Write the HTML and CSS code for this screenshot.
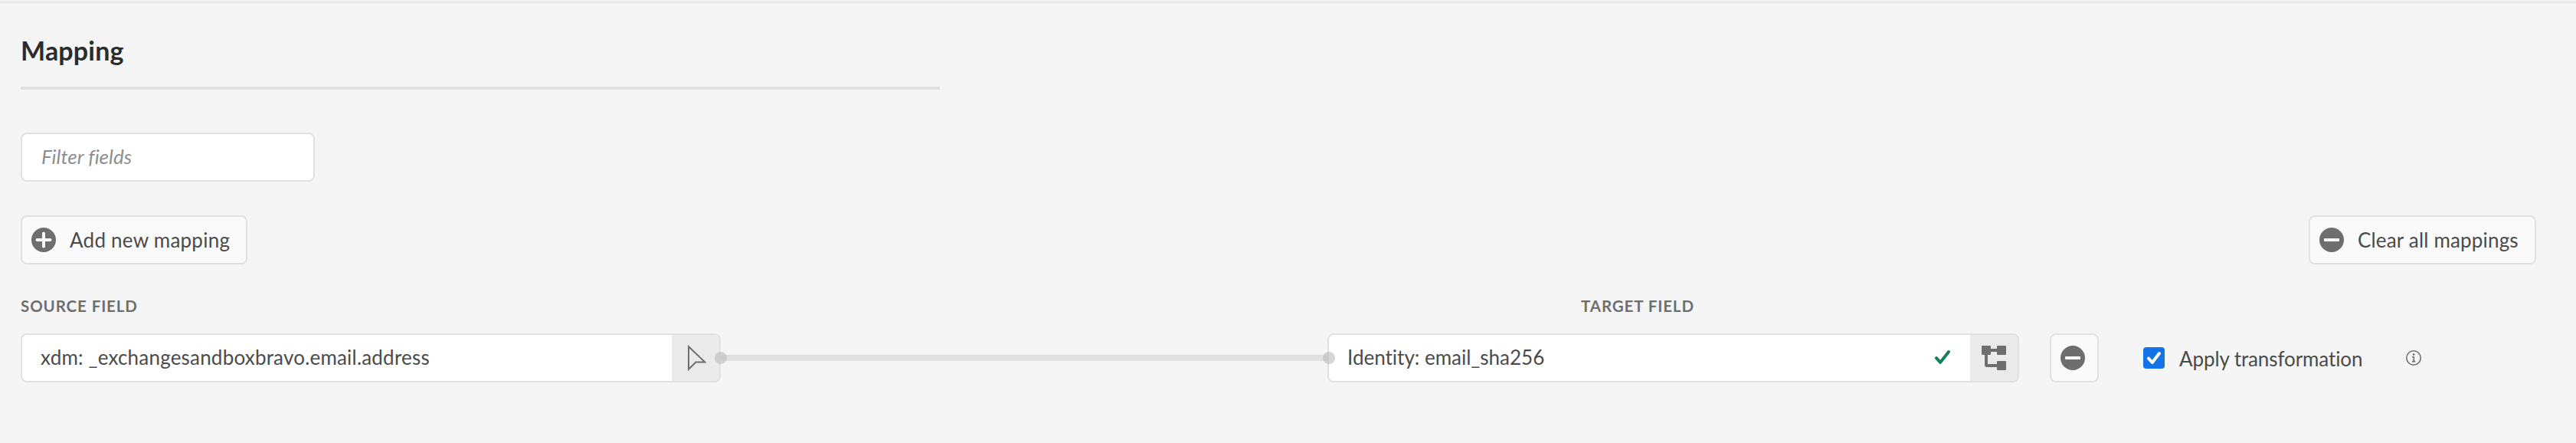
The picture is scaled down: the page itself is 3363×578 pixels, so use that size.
FILE: index.html
```
<!DOCTYPE html>
<html lang="en">
<head>
<meta charset="utf-8">
<title>Mapping</title>
<link rel="stylesheet" href="styles.css">
</head>
<body>
<main class="panel">
  <h1 class="title">Mapping</h1>
  <div class="rule"></div>
  <div class="filter"><span class="filter-text">Filter fields</span></div>

  <div class="toolbar">
    <button class="button" type="button">
      <svg class="icon" viewBox="0 0 32 32"><circle cx="16" cy="16" r="16" fill="#6e6e6e"/><path d="M16 7.5v17M7.5 16h17" stroke="#fafafa" stroke-width="4" stroke-linecap="round"/></svg>
      <span class="add-text">Add new mapping</span>
    </button>
    <button class="button clear" type="button">
      <svg class="icon" viewBox="0 0 32 32"><circle cx="16" cy="16" r="16" fill="#6e6e6e"/><rect x="6" y="14" width="20" height="4" rx="1" fill="#fafafa"/></svg>
      <span class="clear-text">Clear all mappings</span>
    </button>
  </div>

  <div class="labels">
    <span class="label source-label">Source field</span>
    <span class="label target-label">Target field</span>
  </div>

  <div class="mapping-row">
    <div class="field source">
      <span class="value source-value">xdm: _exchangesandboxbravo.email.address</span>
      <span class="picker">
        <svg class="cursor" viewBox="0 0 24 34"><path d="M1 2.2V31.8L10.4 22.6H22.4Z" fill="none" stroke="#6e6e6e" stroke-width="2"/></svg>
      </span>
      <i class="dot dot-right"></i>
    </div>
    <div class="connector"></div>
    <div class="field target">
      <i class="dot dot-left"></i>
      <span class="value target-value">Identity: email_sha256</span>
      <svg class="valid" viewBox="0 0 20 18"><path d="M2 10.2L7.1 15.8L18 2.1" fill="none" stroke="#12805c" stroke-width="4" stroke-linecap="round" stroke-linejoin="round"/></svg>
      <span class="picker">
        <svg class="icon" viewBox="0 0 32 32"><g fill="#6e6e6e"><rect width="12" height="12" rx="1"/><rect x="20" width="12" height="12" rx="1"/><rect x="20" y="20" width="12" height="12" rx="1"/></g><path d="M12 6h8M6 12v13q0 1 1 1h13" fill="none" stroke="#6e6e6e" stroke-width="4"/></svg>
      </span>
    </div>
    <button class="button remove" type="button" aria-label="Remove mapping">
      <svg class="icon" viewBox="0 0 32 32"><circle cx="16" cy="16" r="16" fill="#6e6e6e"/><rect x="6" y="14" width="20" height="4" rx="1" fill="#fafafa"/></svg>
    </button>
    <span class="checkbox">
      <svg class="tick" viewBox="0 0 28 28"><path d="M7 14.6L11.8 20L21 8" fill="none" stroke="#fff" stroke-width="4" stroke-linecap="round" stroke-linejoin="round"/></svg>
    </span>
    <span class="apply">Apply transformation</span>
    <svg class="info" viewBox="0 0 20 20"><circle cx="10" cy="10" r="9.2" fill="none" stroke="#6e6e6e" stroke-width="1.6"/><circle cx="10" cy="5.6" r="1.3" fill="#6e6e6e"/><path d="M8 8.7h2.3v6M8 14.6h4.2" fill="none" stroke="#6e6e6e" stroke-width="1.6"/></svg>
  </div>
</main>
</body>
</html>
```
FILE: styles.css
```
* { box-sizing: border-box; }

body {
  margin: 0;
  background: #f5f5f5;
  color: #4b4b4b;
  font: 400 26px/36px Lato, "Open Sans", sans-serif;
  font-variant-ligatures: none;
}

.panel {
  height: 577px;
  border-top: 4px solid #eaeaea;
  padding: 38px 52px 0 27px;
  margin-top: 1px;
}

.title {
  margin: 0;
  height: 70px;
  padding-left: 0;
  font-size: 34px;
  font-weight: 700;
  line-height: 46px;
  letter-spacing: .2px;
  color: #2c2c2c;
}

.rule { width: 1200px; height: 4px; background: #e1e1e1; }

.filter {
  display: flex;
  align-items: center;
  width: 384px;
  height: 64px;
  margin-top: 56px;
  padding: 0 0 2px 25px;
  border: 2px solid #e1e1e1;
  border-radius: 8px;
  background: #fff;
}

.filter-text { font-style: italic; color: #8e8e8e; }

.toolbar { display: flex; justify-content: space-between; margin-top: 44px; }

.button {
  display: flex;
  align-items: center;
  gap: 18px;
  width: 296px;
  height: 64px;
  padding: 0 0 0 12px;
  border: 2px solid #e1e1e1;
  border-radius: 8px;
  background: #fafafa;
  color: inherit;
  font: inherit;
  white-space: nowrap;
}

.add-text { letter-spacing: .25px; }
.clear { width: 297px; }
.clear-text { letter-spacing: .18px; }

.icon { display: block; flex: none; width: 32px; height: 32px; }

.labels { display: flex; height: 30px; margin-top: 39px; }

.label {
  font-size: 20.5px;
  font-weight: 700;
  line-height: 30px;
  letter-spacing: .9px;
  text-transform: uppercase;
  color: #6e6e6e;
}

.source-label { width: 2037px; }

.mapping-row { display: flex; align-items: center; margin-top: 21px; }

.field {
  position: relative;
  display: flex;
  align-items: center;
  height: 64px;
  border: 2px solid #e1e1e1;
  border-radius: 8px;
  background: #fff;
}

.source { width: 914px; }
.target { width: 903px; }

.value { flex: 1; padding: 0 0 2px 24px; white-space: nowrap; }
.source-value { letter-spacing: .2px; }

.picker {
  display: flex;
  align-items: center;
  justify-content: center;
  width: 62px;
  height: 60px;
  border-radius: 0 6px 6px 0;
  background: #eaeaea;
}

.cursor { width: 24px; height: 34px; margin-left: 3px; }

.dot {
  position: absolute;
  top: 22px;
  width: 16px;
  height: 16px;
  border-radius: 50%;
  background: rgba(190, 190, 190, .65);
}

.dot-right { right: -10px; }
.dot-left { left: -8px; }

.connector { width: 792px; height: 8px; background: #e1e1e1; }

.valid { width: 20px; height: 18px; margin: 0 26px 2px 0; }

.remove { width: 64px; margin-left: 40px; padding-left: 12px; }

.checkbox {
  width: 28px;
  height: 28px;
  margin-left: 58px;
  border-radius: 4px;
  background: #1473e6;
}

.tick { display: block; width: 28px; height: 28px; }

.apply { width: 296px; margin-left: 19px; padding-top: 2px; letter-spacing: -.1px; white-space: nowrap; }

.info { width: 20px; height: 20px; }
```
